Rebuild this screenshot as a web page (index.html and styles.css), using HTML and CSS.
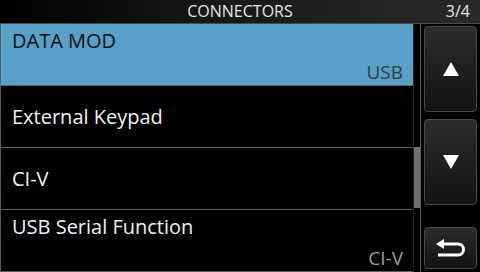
FILE: index.html
```html
<!DOCTYPE html>
<html>
<head>
<meta charset="utf-8">
<link rel="stylesheet" href="styles.css">
</head>
<body>
<div class="screen">
  <div class="titlebar">
    <span></span>
    <span class="title">CONNECTORS</span>
    <span class="page">3/4</span>
  </div>
  <div class="main">
    <div class="list">
      <div class="row selected two">
        <span class="label">DATA MOD</span>
        <span class="value">USB</span>
      </div>
      <div class="row one"><span class="label">External Keypad</span></div>
      <div class="row one"><span class="label">CI-V</span></div>
      <div class="row two">
        <span class="label">USB Serial Function</span>
        <span class="value">CI-V</span>
      </div>
    </div>
    <div class="scroll"><div class="thumb"></div></div>
    <div class="buttons">
      <div class="btn tall">
        <svg width="16" height="14" viewBox="0 0 16 14"><polygon points="8,0 16,14 0,14" fill="#fff"/></svg>
      </div>
      <div class="btn tall down">
        <svg width="16" height="14" viewBox="0 0 16 14"><polygon points="0,0 16,0 8,14" fill="#fff"/></svg>
      </div>
      <div class="btn short">
        <svg width="30" height="18" viewBox="0 0 30 18">
          <polygon points="0,5 8,0 8,10" fill="#fff"/>
          <path d="M7 5 H22 A5.5 5.5 0 0 1 22 16 H2" fill="none" stroke="#fff" stroke-width="3"/>
        </svg>
      </div>
    </div>
  </div>
</div>
</body>
</html>
```
FILE: styles.css
```css
html, body {
  margin: 0;
  padding: 0;
  background: #000;
}
.screen {
  width: 480px;
  height: 272px;
  display: flex;
  flex-direction: column;
  font-family: "Open Sans", "Noto Sans", sans-serif;
  overflow: hidden;
}
.titlebar {
  height: 23px;
  border-bottom: 1px solid #4a4a4a;
  background: linear-gradient(90deg, #000 0%, #161616 40%, #2a2a2a 100%);
  display: grid;
  grid-template-columns: 1fr auto 1fr;
  align-items: center;
  color: #e6e6e6;
  font-size: 16px;
}
.title {
  line-height: 23px;
}
.page {
  justify-self: end;
  padding-right: 10px;
  font-size: 16px;
  line-height: 23px;
}
.main {
  flex: 1;
  display: flex;
}
.list {
  width: 412px;
  border-left: 1px solid #5a5a5a;
  display: flex;
  flex-direction: column;
}
.row {
  height: 61px;
  border-bottom: 1px solid #5e5e5e;
  display: flex;
  flex-direction: column;
  padding: 0 10px 0 11px;
  color: #f2f2f2;
  font-size: 20px;
}
.row.one {
  justify-content: center;
}
.row.two {
  justify-content: space-between;
}
.row.two .label {
  line-height: 26px;
  margin-top: 4px;
}
.row .value {
  align-self: flex-end;
  font-size: 19px;
  line-height: 22px;
  margin-bottom: 2px;
  color: #9c9c9c;
}
.row.selected {
  background: #56a0c9;
  color: #111;
}
.row.selected .value {
  color: #3a3a3a;
}
.scroll {
  width: 6px;
  border-left: 1px solid #222;
  border-right: 1px solid #5a5a5a;
  position: relative;
}
.thumb {
  position: absolute;
  left: 0;
  width: 6px;
  top: 123px;
  height: 61px;
  background: #6c7272;
}
.buttons {
  flex: 1;
  display: flex;
  flex-direction: column;
  padding: 2px 3px 0 3px;
}
.btn {
  border: 1px solid #4a4a4a;
  border-radius: 4px;
  background: linear-gradient(#2c2c2c, #121212);
  display: flex;
  align-items: center;
  justify-content: center;
  box-sizing: border-box;
}
.btn.tall {
  height: 86px;
}
.btn.down {
  margin-top: 7px;
}
.btn.short {
  height: 42px;
  margin-top: 22px;
}
```
